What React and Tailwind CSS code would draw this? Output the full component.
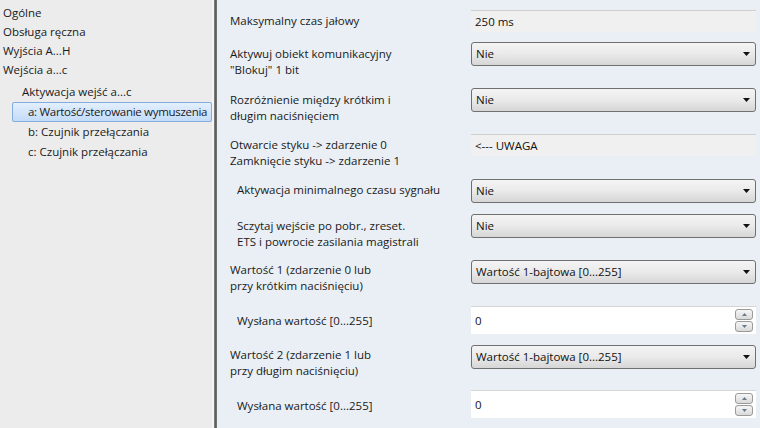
import React from "react";

const font = { fontFamily: '"Open Sans", "Noto Sans", sans-serif' };

function Arrow() {
  return (
    <svg width="7" height="4" viewBox="0 0 7 4" className="shrink-0">
      <path d="M0 0 L7 0 L3.5 4 Z" fill="#111" />
    </svg>
  );
}

function Select({ value }) {
  return (
    <div className="w-[285px] h-[24px] rounded-[3px] border border-[#707070] bg-linear-to-b from-[#f4f4f4] via-[#eaeaea] to-[#d6d6d6] flex items-center pl-[4px] pr-[5px] justify-between text-[11.5px] text-[#111]">
      <span>{value}</span>
      <Arrow />
    </div>
  );
}

function ReadOnly({ value }) {
  return (
    <div className="w-[285px] h-[22px] bg-[#f0f0f0] border-t border-[#cfcfcf] flex items-center pl-[4px] text-[11.5px] text-[#111]">
      {value}
    </div>
  );
}

function SpinBtn({ up }) {
  return (
    <div className="w-[18px] h-[11px] rounded-[3px] border border-[#9a9a9a] bg-linear-to-b from-[#f6f6f6] to-[#d9d9d9] flex items-center justify-center">
      <svg width="5" height="3" viewBox="0 0 5 3">
        {up ? <path d="M0 3 L5 3 L2.5 0 Z" fill="#6a7a8a" /> : <path d="M0 0 L5 0 L2.5 3 Z" fill="#6a7a8a" />}
      </svg>
    </div>
  );
}

function NumInput({ value }) {
  return (
    <div className="w-[285px] h-[28px] bg-white border-t border-[#d6d6d6] flex items-center justify-between pl-[4px] pr-[3px] text-[11.5px] text-[#111]">
      <span>{value}</span>
      <div className="flex flex-col gap-[1px]">
        <SpinBtn up />
        <SpinBtn />
      </div>
    </div>
  );
}

function Row({ h, indent, lines, children, pt }) {
  return (
    <div className={`flex items-start ${h}`}>
      <div className={`w-[241px] shrink-0 text-[11.5px] leading-[16px] text-[#1a1a1a] ${pt} ${indent ? "pl-[7px]" : ""}`}>
        {lines.map((l, i) => (
          <div key={i}>{l}</div>
        ))}
      </div>
      {children}
    </div>
  );
}

function TreeItem({ text, pl, h = "h-[20px]", selected }) {
  return (
    <div className={`${h} flex items-center`}>
      {selected ? (
        <div className="ml-[12px] w-[201px] h-[20px] rounded-[2px] border border-[#84acdd] bg-linear-to-b from-[#e3effd] to-[#c3dcf9] flex items-center pl-[15px] whitespace-nowrap tracking-[-0.3px]">
          {text}
        </div>
      ) : (
        <span className={`${pl} whitespace-nowrap`}>{text}</span>
      )}
    </div>
  );
}

export default function App() {
  return (
    <div style={font} className="w-[760px] h-[428px] flex overflow-hidden bg-[#e9eff5]">
      <div className="w-[214px] shrink-0 bg-[#ececec] pt-[3px] text-[11.5px] text-[#1a1a1a] border-r-[2px] border-[#f4f4f4] overflow-hidden">
        <TreeItem text="Ogólne" pl="pl-[3px]" h="h-[19px]" />
        <TreeItem text="Obsługa ręczna" pl="pl-[3px]" h="h-[19px]" />
        <TreeItem text="Wyjścia A...H" pl="pl-[3px]" h="h-[19px]" />
        <TreeItem text="Wejścia a...c" pl="pl-[3px]" h="h-[19px]" />
        <div className="h-[3px]" />
        <TreeItem text="Aktywacja wejść a...c" pl="pl-[22px]" />
        <TreeItem text="a: Wartość/sterowanie wymuszenia" selected />
        <TreeItem text="b: Czujnik przełączania" pl="pl-[28px]" />
        <TreeItem text="c: Czujnik przełączania" pl="pl-[28px]" />
      </div>
      <div className="w-[3px] shrink-0 bg-linear-to-r from-[#8a8a8a] via-[#5e5e5e] to-[#7a7a7a]" />
      <div className="flex-1 pl-[13px] pt-[10px]">
        <Row h="h-[32px]" lines={["Maksymalny czas jałowy"]} pt="pt-[3px]">
          <ReadOnly value="250 ms" />
        </Row>
        <Row h="h-[46px]" lines={["Aktywuj obiekt komunikacyjny", '"Blokuj" 1 bit']} pt="pt-[4px]">
          <Select value="Nie" />
        </Row>
        <Row h="h-[46px]" lines={["Rozróżnienie między krótkim i", "długim naciśnięciem"]} pt="pt-[4px]">
          <Select value="Nie" />
        </Row>
        <Row h="h-[45px]" lines={["Otwarcie styku -> zdarzenie 0", "Zamknięcie styku -> zdarzenie 1"]} pt="pt-[3px]">
          <ReadOnly value="<--- UWAGA" />
        </Row>
        <Row h="h-[35px]" indent lines={["Aktywacja minimalnego czasu sygnału"]} pt="pt-[3px]">
          <Select value="Nie" />
        </Row>
        <Row h="h-[46px]" indent lines={["Sczytaj wejście po pobr., zreset.", "ETS i powrocie zasilania magistrali"]} pt="pt-[4px]">
          <Select value="Nie" />
        </Row>
        <Row h="h-[46px]" lines={["Wartość 1 (zdarzenie 0 lub", "przy krótkim naciśnięciu)"]} pt="pt-[2px]">
          <Select value="Wartość 1-bajtowa [0...255]" />
        </Row>
        <Row h="h-[39px]" indent lines={["Wysłana wartość [0...255]"]} pt="pt-[7px]">
          <NumInput value="0" />
        </Row>
        <Row h="h-[45px]" lines={["Wartość 2 (zdarzenie 1 lub", "przy długim naciśnięciu)"]} pt="pt-[2px]">
          <Select value="Wartość 1-bajtowa [0...255]" />
        </Row>
        <Row h="h-[39px]" indent lines={["Wysłana wartość [0...255]"]} pt="pt-[8px]">
          <NumInput value="0" />
        </Row>
      </div>
    </div>
  );
}
